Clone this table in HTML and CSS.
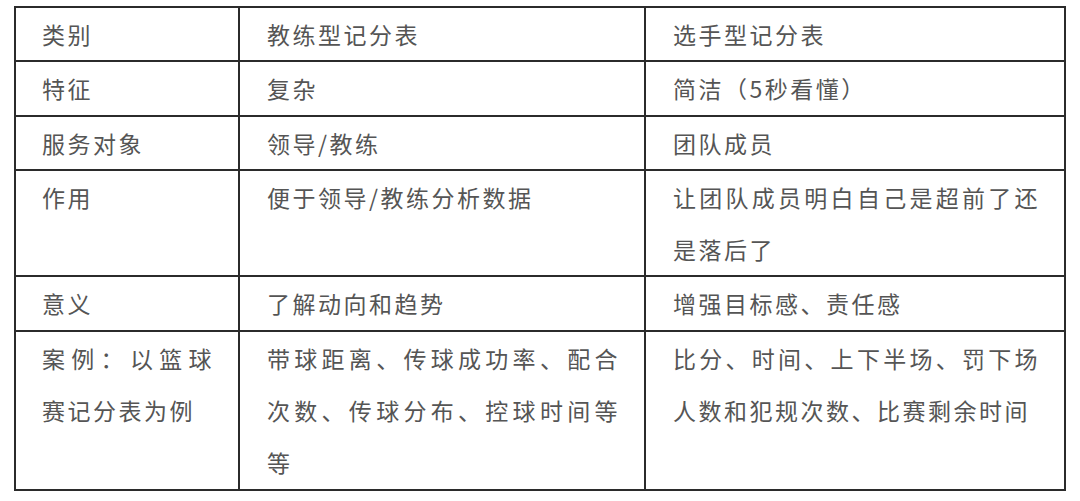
FILE: index.html
```html
<!DOCTYPE html>
<html lang="zh-CN">
<head>
<meta charset="utf-8">
<link rel="stylesheet" href="styles.css">
</head>
<body>
<table class="sheet">
  <colgroup>
    <col class="c1">
    <col class="c2">
    <col class="c3">
  </colgroup>
  <tr><td>类别</td><td>教练型记分表</td><td>选手型记分表</td></tr>
  <tr><td>特征</td><td>复杂</td><td>简洁（5秒看懂）</td></tr>
  <tr><td>服务对象</td><td>领导/教练</td><td>团队成员</td></tr>
  <tr><td>作用</td><td>便于领导/教练分析数据</td><td>让团队成员明白自己是超前了还是落后了</td></tr>
  <tr><td>意义</td><td>了解动向和趋势</td><td>增强目标感、责任感</td></tr>
  <tr><td>案例：以篮球赛记分表为例</td><td>带球距离、传球成功率、配合次数、传球分布、控球时间等等</td><td>比分、时间、上下半场、罚下场人数和犯规次数、比赛剩余时间</td></tr>
</table>
</body>
</html>
```

FILE: styles.css
```css
html, body {
  margin: 0;
  padding: 0;
  background: #ffffff;
}

body {
  padding: 6px 0 0 14px;
}

.sheet {
  border-collapse: collapse;
  table-layout: fixed;
  width: 1050px;
}

.c1 { width: 224px; }
.c2 { width: 406px; }
.c3 { width: 420px; }

.sheet td {
  border: 2px solid #2b2b2b;
  vertical-align: top;
  padding: 0 24px 0 26px;
  font-family: "Noto Sans CJK SC", "Noto Sans", sans-serif;
  font-weight: 400;
  font-size: 23px;
  letter-spacing: 2.5px;
  line-height: 52.3px;
  color: #555555;
  text-align: justify;
}

.sheet td + td {
  padding-left: 27px;
}
```
